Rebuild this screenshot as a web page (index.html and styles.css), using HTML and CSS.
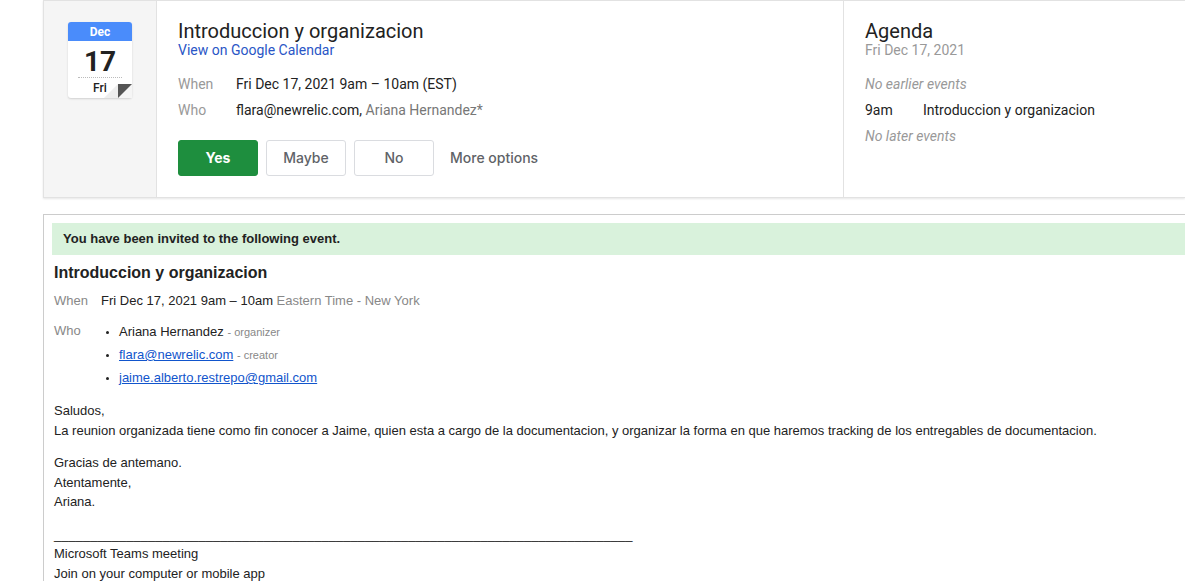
FILE: index.html
```html
<!DOCTYPE html>
<html lang="en">
<head>
<meta charset="utf-8">
<title>Introduccion y organizacion</title>
<link rel="stylesheet" href="styles.css">
</head>
<body>
<section class="card">
  <div class="date-column">
    <div class="calendar">
      <div class="calendar-month">Dec</div>
      <div class="calendar-day">17</div>
      <div class="calendar-weekday">Fri</div>
      <svg class="calendar-fold" width="28" height="14" viewBox="0 0 28 14" aria-hidden="true">
        <path d="M0 14 14 0V14Z" fill="#eee"/>
        <path d="M14 0H28V14H14Z" fill="#f5f5f5"/>
        <path d="M14 0H28L14 14Z" fill="#555"/>
      </svg>
    </div>
  </div>
  <div class="summary">
    <h1 class="card-title">Introduccion y organizacion</h1>
    <a class="calendar-link" href="#calendar">View on Google Calendar</a>
    <dl class="details">
      <dt>When</dt><dd>Fri Dec 17, 2021 9am – 10am (EST)</dd>
      <dt>Who</dt><dd>flara@newrelic.com, <span class="muted">Ariana Hernandez*</span></dd>
    </dl>
    <div class="actions">
      <button class="button button-yes" type="button">Yes</button>
      <button class="button" type="button">Maybe</button>
      <button class="button" type="button">No</button>
      <button class="button button-more" type="button">More options</button>
    </div>
  </div>
  <aside class="agenda">
    <h2 class="card-title">Agenda</h2>
    <div class="agenda-date">Fri Dec 17, 2021</div>
    <div class="agenda-list">
      <div class="agenda-empty">No earlier events</div>
      <div class="agenda-event"><span class="agenda-time">9am</span><span>Introduccion y organizacion</span></div>
      <div class="agenda-empty">No later events</div>
    </div>
  </aside>
</section>
<main class="invitation">
  <p class="notice">You have been invited to the following event.</p>
  <div class="invitation-body">
    <h2 class="event-title">Introduccion y organizacion</h2>
    <dl class="event-details">
      <dt>When</dt>
      <dd>Fri Dec 17, 2021 9am – 10am <span class="zone">Eastern Time - New York</span></dd>
      <dt>Who</dt>
      <dd>
        <ul class="guests">
          <li>Ariana Hernandez <span class="role">- organizer</span></li>
          <li><a href="mailto:flara@newrelic.com">flara@newrelic.com</a> <span class="role">- creator</span></li>
          <li><a href="mailto:jaime.alberto.restrepo@gmail.com">jaime.alberto.restrepo@gmail.com</a></li>
        </ul>
      </dd>
    </dl>
    <div class="message">
      <p>Saludos,<br>La reunion organizada tiene como fin conocer a Jaime, quien esta a cargo de la documentacion, y organizar la forma en que haremos tracking de los entregables de documentacion.</p>
      <p>Gracias de antemano.<br>Atentamente,<br>Ariana.</p>
      <p>________________________________________________________________________________<br>Microsoft Teams meeting<br>Join on your computer or mobile app</p>
    </div>
  </div>
</main>
</body>
</html>
```

FILE: styles.css
```css
* {
  box-sizing: border-box;
}

body {
  display: flex;
  flex-direction: column;
  gap: 16px;
  height: 100vh;
  margin: 0;
  padding-left: 43px;
  overflow: hidden;
  background: #fff;
  color: #222;
  font-family: "Liberation Sans", Arial, sans-serif;
  font-size: 13px;
}

h1, h2, p, dl, dd, ul {
  margin: 0;
  padding: 0;
}

.card {
  display: grid;
  grid-template-columns: 112px minmax(0, 1fr) 342px;
  flex-shrink: 0;
  border: 1px solid #e2e2e2;
  border-right: 0;
  box-shadow: 0 1px 2px #0000001a;
  font-family: Roboto, sans-serif;
  font-size: 14px;
}

.date-column {
  padding: 21px 24px;
  background: #f5f5f5;
}

.calendar {
  position: relative;
  width: 64px;
  height: 76px;
  border-radius: 3px;
  background: #fff;
  box-shadow: 0 1px 2px #00000026;
  text-align: center;
}

.calendar-month {
  padding-top: 1px;
  border-radius: 3px 3px 0 0;
  background: #4a8cfb;
  color: #fff;
  font-size: 12px;
  font-weight: 700;
  line-height: 18px;
}

.calendar-day {
  margin: 0 10px;
  padding-top: 6px;
  border-bottom: 1px dotted #bbb;
  font-size: 28px;
  font-weight: 700;
  line-height: 30px;
}

.calendar-weekday {
  font-size: 12px;
  font-weight: 500;
  line-height: 20px;
}

.calendar-fold {
  position: absolute;
  right: 0;
  bottom: 0;
}

.summary, .agenda {
  padding: 19px 21px 21px;
  border-left: 1px solid #e2e2e2;
}

.card-title {
  font-size: 20px;
  font-weight: 400;
  line-height: 22px;
}

.calendar-link {
  display: block;
  color: #2a56c6;
  line-height: 16px;
  text-decoration: none;
}

.details {
  display: grid;
  grid-template-columns: 58px 1fr;
  margin-top: 13px;
  line-height: 26px;
}

.details dt, .agenda-date, .agenda-empty {
  color: #999;
}

.muted {
  color: #777;
}

.actions {
  display: flex;
  gap: 8px;
  margin-top: 17px;
}

.button {
  width: 80px;
  height: 36px;
  padding: 0 0 2px;
  border: 1px solid #dadce0;
  border-radius: 3px;
  background: #fff;
  color: #5f6368;
  font-family: Inter, sans-serif;
  font-size: 14px;
  font-weight: 500;
}

.button-yes {
  border-color: #1e8e3e;
  background: #1e8e3e;
  color: #fff;
  font-weight: 700;
}

.button-more {
  width: auto;
  padding: 0 8px 2px;
  border: 0;
}

.agenda-date {
  line-height: 16px;
}

.agenda-list {
  margin-top: 13px;
  line-height: 26px;
}

.agenda-empty {
  font-style: italic;
}

.agenda-event {
  display: grid;
  grid-template-columns: 58px 1fr;
}

.invitation {
  flex: 1;
  min-height: 0;
  padding: 8px 0 0 8px;
  border: 1px solid #ccc;
  border-width: 1px 0 0 1px;
}

.notice {
  padding: 0 11px;
  background: #d9f2dc;
  font-weight: 700;
  line-height: 32px;
}

.invitation-body {
  padding: 8px 2px;
}

.event-title {
  font-size: 16px;
  line-height: 20px;
}

.event-details {
  display: grid;
  grid-template-columns: 47px 1fr;
  row-gap: 8px;
  margin-top: 7px;
  line-height: 22px;
}

.event-details dt, .zone, .role {
  color: #888;
}

.role {
  font-size: 11px;
  line-height: 1;
}

.guests {
  padding-left: 18px;
  line-height: 23px;
}

.guests li::marker {
  font-size: 10px;
  line-height: 1;
}

.guests a {
  color: #1155cc;
}

.message {
  display: grid;
  gap: 13px;
  margin-top: 12px;
  line-height: 1.5;
}
```
